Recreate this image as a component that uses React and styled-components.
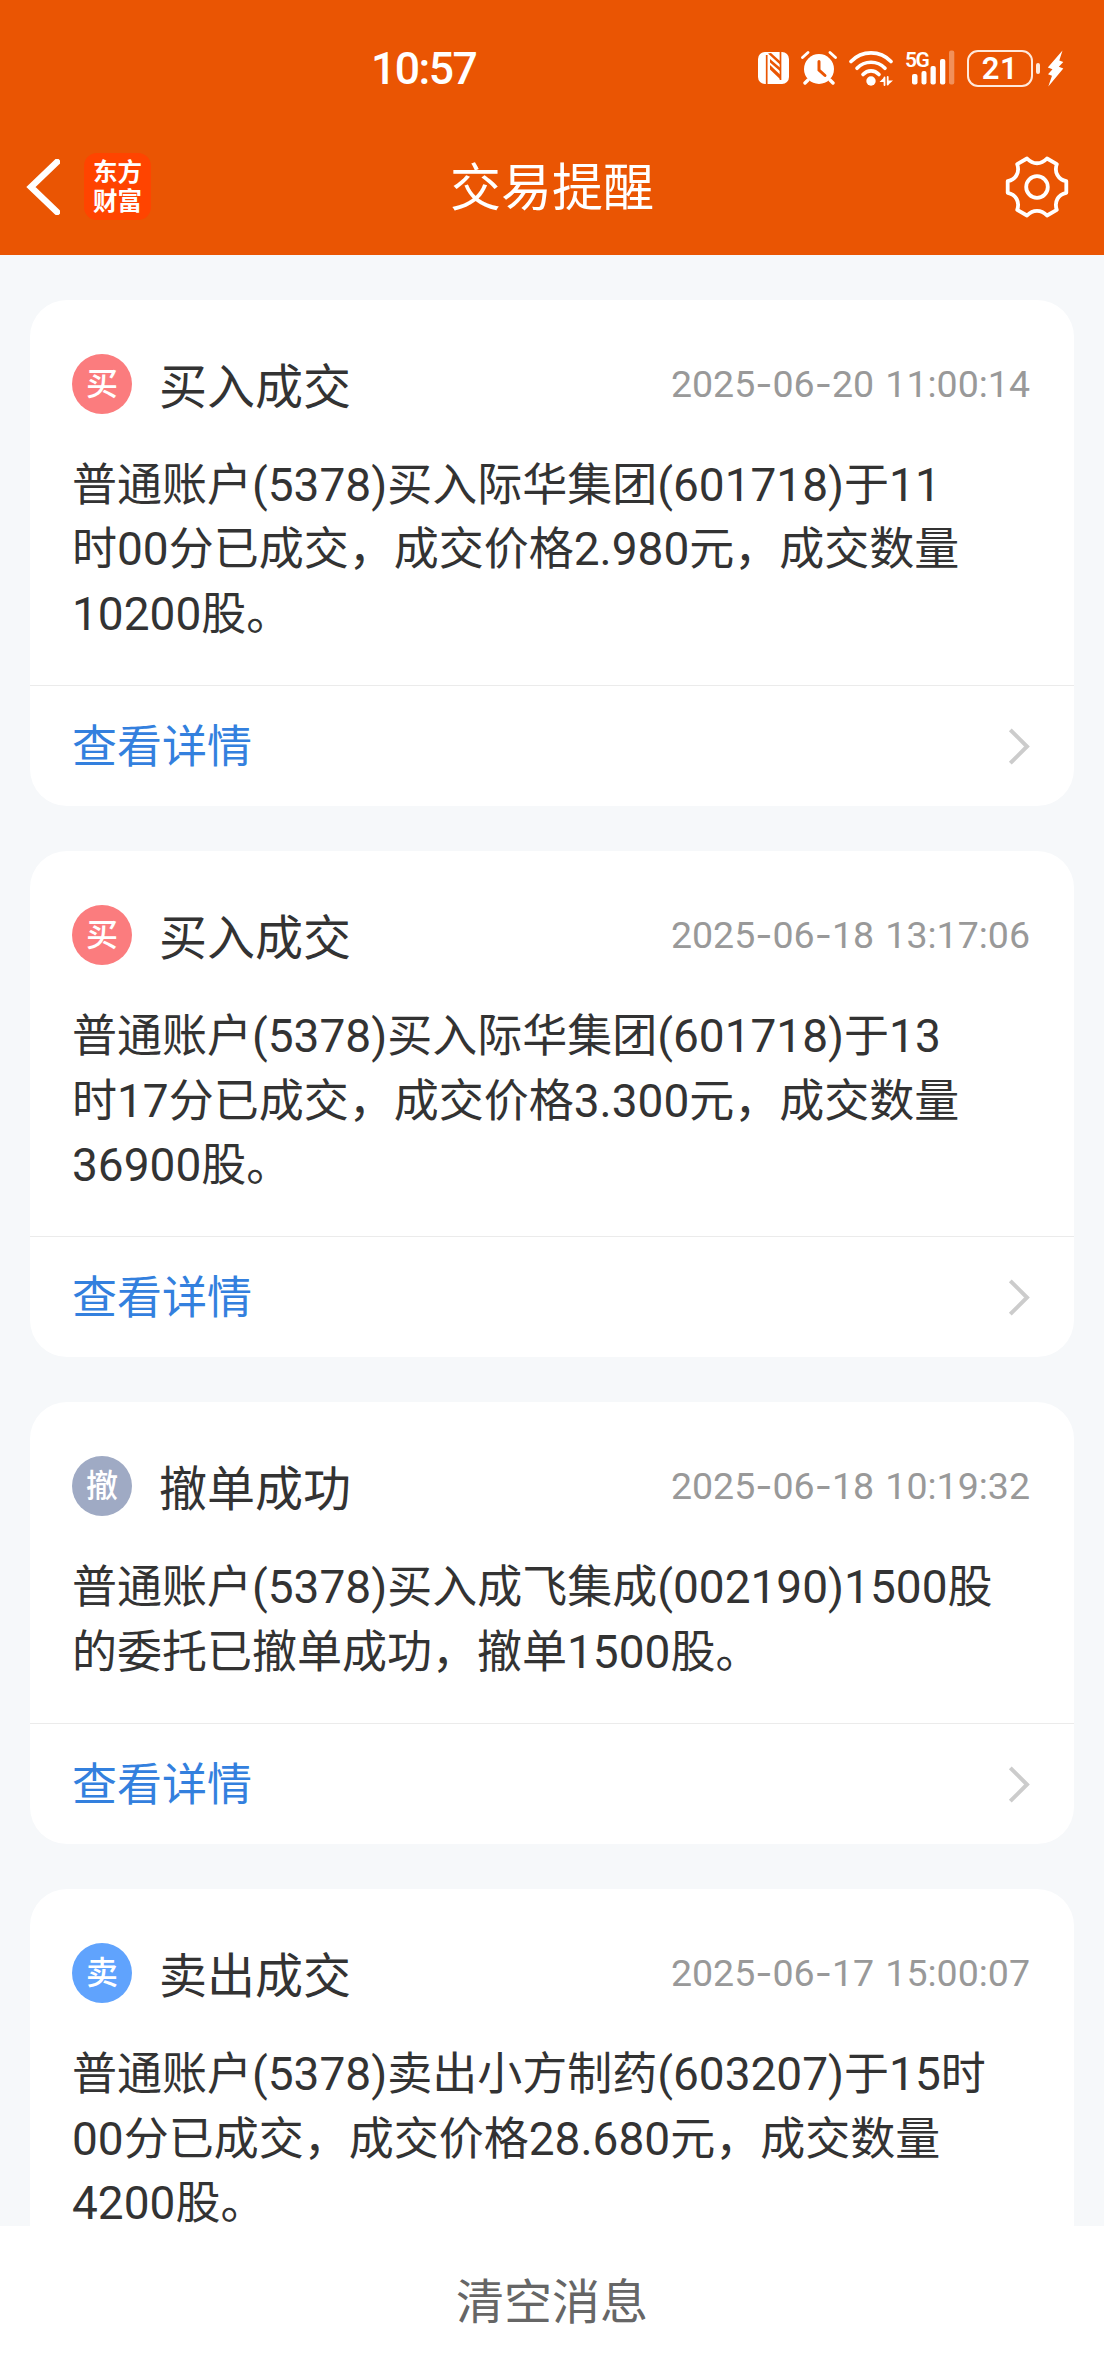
import React, { Fragment } from 'react';
import styled, { createGlobalStyle } from 'styled-components';

const GlobalStyle = createGlobalStyle`
  * {
    box-sizing: border-box;
  }
  body {
    margin: 0;
    background: #f6f8fa;
    font-family: Roboto, 'Noto Sans CJK SC', sans-serif;
    color: #333333;
  }
`;

const Page = styled.div`
  display: flex;
  flex-direction: column;
  width: 1104px;
  height: 2376px;
  overflow: hidden;
`;

const TopBar = styled.header`
  flex: none;
  height: 255px;
  background: #ea5503;
  color: #ffffff;
`;

const StatusBar = styled.div`
  display: flex;
  justify-content: space-between;
  align-items: center;
  height: 118px;
  padding: 18px 40px 0 371px;
`;

const Clock = styled.div`
  padding-top: 1px;
  font-size: 44.5px;
  line-height: 50px;
  font-weight: 500;
  letter-spacing: -1.5px;
`;

const StatusIcons = styled.div`
  display: flex;
  align-items: center;
  height: 40px;
  & svg {
    display: block;
    flex: none;
  }
`;

const Spacer = styled.div`
  flex: none;
  width: ${props => props.$size}px;
`;

const Signal = styled.div`
  position: relative;
  width: 50px;
  height: 36px;
`;

const Network = styled.span`
  position: absolute;
  left: 0;
  top: -1px;
  font-size: 21px;
  line-height: 22px;
  font-weight: 600;
  letter-spacing: -1.5px;
`;

const BatteryBody = styled.div`
  display: flex;
  align-items: center;
  justify-content: center;
  width: 66px;
  height: 37px;
  padding-top: 1px;
  border: 2.5px solid #ffe9dc;
  border-radius: 11px;
  font-size: 31px;
  line-height: 32px;
  font-weight: 600;
  letter-spacing: 0.5px;
`;

const BatteryTip = styled.div`
  width: 4px;
  height: 11px;
  margin-left: 3px;
  border-radius: 2px;
  background: #ffe9dc;
`;

const NavBar = styled.div`
  display: grid;
  grid-template-columns: 1fr auto 1fr;
  align-items: center;
  height: 137px;
  padding: 0 35px 0 26px;
`;

const NavLeft = styled.div`
  display: flex;
  align-items: center;
  gap: 24px;
`;

const NavRight = styled.div`
  display: flex;
  justify-content: flex-end;
`;

const NavTitle = styled.h1`
  margin: 0;
  padding: 5px 0 0 9px;
  font-size: 51px;
  line-height: 60px;
  font-weight: 400;
`;

const Logo = styled.div`
  display: flex;
  flex-direction: column;
  align-items: center;
  justify-content: center;
  width: 67px;
  height: 67px;
  border-radius: 13px;
  background: #ff4400;
  font-size: 24.5px;
  line-height: 29px;
  font-weight: 700;
`;

const List = styled.main`
  flex: 1;
  min-height: 0;
  overflow: hidden;
  display: flex;
  flex-direction: column;
  gap: 45px;
  padding: 45px 30px 0;
`;

const Card = styled.article`
  flex: none;
  border-radius: 37px;
  background: #ffffff;
`;

const CardHead = styled.div`
  display: flex;
  align-items: center;
  height: 60px;
  margin: 0 2px 40px 0;
`;

const Badge = styled.div`
  display: flex;
  align-items: center;
  justify-content: center;
  width: 60px;
  height: 60px;
  border-radius: 50%;
  background: ${props => props.$color};
  color: #ffffff;
  font-size: 32px;
  line-height: 32px;
  font-weight: 500;
`;

const CardTitle = styled.h2`
  margin: 8px 0 0 27px;
  font-size: 48px;
  line-height: 60px;
  font-weight: 400;
`;

const CardTime = styled.time`
  margin: 0 0 0 auto;
  color: #999999;
  font-size: 37.5px;
  line-height: 44px;
  word-spacing: 2px;
`;

const Dash = styled.span`
  font-family: Inter, sans-serif;
`;

const CardText = styled.p`
  margin: 0;
  font-size: 45px;
  line-height: 64.4px;
  white-space: nowrap;
`;

const Figures = styled.span`
  font-size: 46px;
  line-height: 1;
`;

const CardBody = styled.div`
  padding: 54px 42px 38px;
`;

const CardLink = styled.div`
  display: flex;
  align-items: center;
  justify-content: space-between;
  height: 121px;
  padding: 0 44px 0 42px;
  border-top: 1px solid #ebebeb;
  color: #3380de;
  font-size: 45px;
  line-height: 60px;
`;

const LinkLabel = styled.span`
  padding-top: 4px;
`;

const ClearButton = styled.footer`
  flex: none;
  display: flex;
  align-items: center;
  justify-content: center;
  height: 150px;
  padding-top: 4px;
  background: #ffffff;
  color: #666666;
  font-size: 48px;
  line-height: 60px;
`;

const NfcIcon = () => (
  <svg width="31" height="32" viewBox="0 0 31 32" fill="none">
    <rect width="31" height="32" rx="7" fill="#fff" />
    <path d="M8.7 3V32M22.5 0V28" stroke="#ea5503" strokeWidth="1.7" />
    <path d="M10 1.5L22.5 13V9.5L13 1zM12 10.5L22.5 19.5V16L12 7zM12 17.500L22.500 27.500V23L12 13z" fill="#ea5503" />
  </svg>
);

const AlarmIcon = () => (
  <svg width="36" height="34" viewBox="0 0 36 34" fill="none" stroke="#fff" strokeLinecap="round">
    <circle cx="18" cy="18" r="15" fill="#fff" stroke="none" />
    <path d="M1.5 6.5L7 1.5M34.5 6.5L29 1.5" strokeWidth="2.8" />
    <path d="M7 29l-3 3M29 29l3 3" strokeWidth="3.4" />
    <path d="M18 10.5V19l6 5.5" stroke="#ea5503" strokeWidth="3" />
  </svg>
);

const WifiIcon = () => (
  <svg width="44" height="35" viewBox="0 0 44 35" fill="none" stroke="#fff" strokeLinecap="round">
    <path d="M2 10.5C13 -1 31 -1 42 10.5" strokeWidth="3.6" />
    <path d="M8 17.3C15.5 9.3 28.5 9.3 36 17.3" strokeWidth="3.6" />
    <path d="M14 23.5C18.5 18.6 25.5 18.6 30 23.5" strokeWidth="3.6" />
    <circle cx="22" cy="30" r="4.7" fill="#fff" stroke="none" />
    <path d="M30.500 31l4.500-4.500v4.500zM44 29.500h-5v4.500z" fill="#fff" stroke="none" />
    <path d="M35.500 26.500v7.500M38.700 26v7.500" strokeWidth="1.8" />
  </svg>
);

const SignalBars = () => (
  <svg width="50" height="36" viewBox="0 0 50 36" fill="#fff">
    <rect x="7" y="24" width="5.5" height="10.5" rx="2" />
    <rect x="16.5" y="21" width="5" height="13.5" rx="2" />
    <rect x="25.5" y="16" width="5.3" height="18.5" rx="2" />
    <rect x="35" y="9" width="5.3" height="25.5" rx="2" />
    <rect x="44" y="0.5" width="5.3" height="34" rx="2" opacity="0.35" />
  </svg>
);

const BoltIcon = () => (
  <svg width="17" height="37" viewBox="0 0 17 37" fill="#fff">
    <path d="M15.500 0.500L0.800 17.500 5.500 19.200 1 24.200 5 25.800 1.300 36.500 16.300 18.600 11.800 16.800 16.300 12 12.300 10.400z" />
  </svg>
);

const BackIcon = () => (
  <svg width="34" height="56" viewBox="0 0 34 56" fill="none">
    <path d="M31 3L5 28l26 25" stroke="#fff" strokeWidth="6.5" strokeLinecap="round" />
  </svg>
);

const GearIcon = () => (
  <svg width="64" height="64" viewBox="0 0 64 64" fill="none" stroke="#fff" strokeWidth="3.8">
    <path
      strokeLinejoin="round"
      d="M22 3.500C28 9.800 36 9.800 42 3.500L51.800 9.200C49 17 53 24.500 61.300 26.200V37.800C53 39.500 49 47 51.800 54.800L42 60.500C36 54.200 28 54.200 22 60.500L12.200 54.800C15 47 11 39.500 2.700 37.800V26.200C11 24.500 15 17 12.200 9.200z"
    />
    <circle cx="32" cy="32" r="10.8" />
  </svg>
);

const ArrowIcon = () => (
  <svg width="22" height="37" viewBox="0 0 22 37" fill="none">
    <path d="M2.3 1.8L19 18.5 2.3 35.2" stroke="#cccccc" strokeWidth="4" />
  </svg>
);

const messages = [
  {
    id: 1,
    badge: '买',
    color: '#fb7c7e',
    title: '买入成交',
    time: '2025-06-20 11:00:14',
    lines: ['普通账户(5378)买入际华集团(601718)于11', '时00分已成交，成交价格2.980元，成交数量', '10200股。'],
  },
  {
    id: 2,
    badge: '买',
    color: '#fb7c7e',
    title: '买入成交',
    time: '2025-06-18 13:17:06',
    lines: ['普通账户(5378)买入际华集团(601718)于13', '时17分已成交，成交价格3.300元，成交数量', '36900股。'],
  },
  {
    id: 3,
    badge: '撤',
    color: '#9faac4',
    title: '撤单成功',
    time: '2025-06-18 10:19:32',
    lines: ['普通账户(5378)买入成飞集成(002190)1500股', '的委托已撤单成功，撤单1500股。'],
  },
  {
    id: 4,
    badge: '卖',
    color: '#60a3fd',
    title: '卖出成交',
    time: '2025-06-17 15:00:07',
    lines: ['普通账户(5378)卖出小方制药(603207)于15时', '00分已成交，成交价格28.680元，成交数量', '4200股。'],
  },
];

// digits are set slightly larger than the Chinese text around them
const renderLine = line =>
  line.split(/([0-9.()]+)/).map((part, i) => (i % 2 ? <Figures key={i}>{part}</Figures> : part));

const renderTime = time => time.split(/(-)/).map((part, i) => (i % 2 ? <Dash key={i}>{part}</Dash> : part));

const Message = ({ item }) => (
  <Card>
    <CardBody>
      <CardHead>
        <Badge $color={item.color}>{item.badge}</Badge>
        <CardTitle>{item.title}</CardTitle>
        <CardTime>{renderTime(item.time)}</CardTime>
      </CardHead>
      <CardText>
        {item.lines.map((line, i) => (
          <Fragment key={line}>
            {i > 0 && <br />}
            {renderLine(line)}
          </Fragment>
        ))}
      </CardText>
    </CardBody>
    <CardLink>
      <LinkLabel>查看详情</LinkLabel>
      <ArrowIcon />
    </CardLink>
  </Card>
);

export default function App() {
  return (
    <Page>
      <GlobalStyle />
      <TopBar>
        <StatusBar>
          <Clock>10:57</Clock>
          <StatusIcons>
            <NfcIcon />
            <Spacer $size={12} />
            <AlarmIcon />
            <Spacer $size={12} />
            <WifiIcon />
            <Spacer $size={12} />
            <Signal>
              <SignalBars />
              <Network>5G</Network>
            </Signal>
            <Spacer $size={12} />
            <BatteryBody>21</BatteryBody>
            <BatteryTip />
            <Spacer $size={7} />
            <BoltIcon />
          </StatusIcons>
        </StatusBar>
        <NavBar>
          <NavLeft>
            <BackIcon />
            <Logo>
              <span>东方</span>
              <span>财富</span>
            </Logo>
          </NavLeft>
          <NavTitle>交易提醒</NavTitle>
          <NavRight>
            <GearIcon />
          </NavRight>
        </NavBar>
      </TopBar>
      <List>
        {messages.map(item => (
          <Message key={item.id} item={item} />
        ))}
      </List>
      <ClearButton>清空消息</ClearButton>
    </Page>
  );
}
